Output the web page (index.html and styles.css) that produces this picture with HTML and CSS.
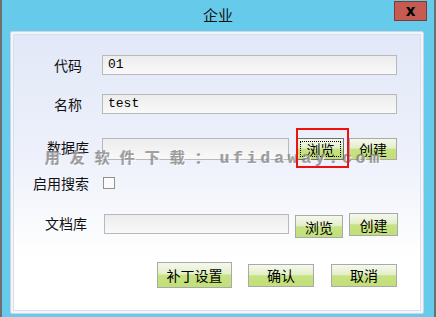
FILE: index.html
```html
<!DOCTYPE html>
<html lang="zh-CN">
<head>
  <meta charset="UTF-8" />
  <title>企业</title>
  <link rel="stylesheet" href="styles.css">
</head>
<body>
  <div class="window">
    <div class="titlebar">
      <span class="title">企业</span>
      <button class="close">x</button>
    </div>

    <div class="panel">
      <div class="row row-code">
        <label class="lbl">代码</label>
        <div class="field field-wide">01</div>
      </div>

      <div class="row row-name">
        <label class="lbl">名称</label>
        <div class="field field-wide">test</div>
      </div>

      <div class="row row-db">
        <label class="lbl">数据库</label>
        <div class="field field-short"></div>
        <button class="btn btn-small btn-focus">浏览</button>
        <button class="btn btn-small btn-create">创建</button>
      </div>

      <div class="row row-search">
        <label class="lbl lbl-search">启用搜索</label>
        <span class="check"></span>
      </div>

      <div class="row row-doc">
        <label class="lbl lbl-doc">文档库</label>
        <div class="field field-doc"></div>
        <button class="btn btn-small btn-doc-browse">浏览</button>
        <button class="btn btn-small btn-doc-create">创建</button>
      </div>

      <div class="row row-actions">
        <button class="btn btn-patch">补丁设置</button>
        <button class="btn btn-ok">确认</button>
        <button class="btn btn-cancel">取消</button>
      </div>

      <div class="watermark"><span class="wm-cjk">用友软件下载：</span><span class="wm-latin">ufidaway.com</span></div>
      <div class="highlight"></div>
    </div>
  </div>
</body>
</html>
```

FILE: styles.css
```css
body {
  margin: 0;
  font-family: "Noto Sans CJK SC", "Noto Sans", sans-serif;
  font-size: 14px;
  color: #111;
}

.window {
  width: 436px;
  height: 317px;
  box-sizing: border-box;
  background: #66caea;
  border-left: 2px solid #6e6e6e;
  border-right: 2px solid #6e6e6e;
  overflow: hidden;
}

.titlebar {
  position: relative;
  height: 31px;
  display: flex;
  align-items: center;
  justify-content: center;
}

.title {
  font-size: 15px;
  line-height: 18px;
  margin-top: -1px;
}

.close {
  position: absolute;
  top: 1px;
  right: 7px;
  width: 33px;
  height: 20px;
  padding: 0;
  background: #c55b51;
  border: 1px solid #7c3b35;
  font-family: "DejaVu Sans", sans-serif;
  font-weight: bold;
  font-size: 15px;
  line-height: 16px;
  color: #000;
}

.panel {
  position: relative;
  height: 283px;
  box-sizing: border-box;
  margin: 0 10px 0 8px;
  border: 1px solid #cbd6e4;
  border-radius: 2px;
  background: linear-gradient(#e2e8f8 0%, #eef1fb 45%, #ffffff 80%);
  box-shadow: inset 0 0 0 2px #f3f5fb, inset 0 0 0 3px #d9e0ec;
  display: flex;
  flex-direction: column;
}

.row {
  display: flex;
  align-items: center;
}

.lbl {
  width: 64px;
  margin-left: 25px;
  text-align: center;
  line-height: 20px;
  white-space: nowrap;
  flex-shrink: 0;
}

.lbl-search {
  width: 66px;
  margin-left: 22px;
  text-align: left;
}

.lbl-doc {
  width: 58px;
  margin-left: 26px;
}

.field {
  height: 20px;
  box-sizing: border-box;
  margin-left: 2px;
  border: 1px solid #b9b9b9;
  background: linear-gradient(#ececec, #f9f9f9);
  font-family: "Liberation Mono", monospace;
  font-size: 13px;
  line-height: 18px;
  padding-left: 5px;
  color: #000;
}

.field-wide {
  width: 295px;
}

.field-short {
  width: 187px;
  height: 22px;
}

.field-doc {
  width: 185px;
  margin-left: 9px;
  margin-top: 1px;
}

.check {
  width: 12px;
  height: 12px;
  box-sizing: border-box;
  margin-left: 4px;
  border: 1px solid #929292;
  background: #fbfbfb;
}

.btn {
  position: relative;
  padding: 0;
  box-sizing: border-box;
  border: 1px solid #a9a9a9;
  background: linear-gradient(#f5f8ee 0%, #e3efc9 45%, #c7e283 52%, #c2df78 100%);
  font-family: "Noto Sans CJK SC", sans-serif;
  font-size: 14px;
  line-height: 18px;
  color: #000;
}

.btn-small {
  width: 48px;
  height: 22px;
}

.btn-focus {
  margin-left: 8px;
  width: 47px;
  border-color: #6f6f6f;
}

.btn-focus::after {
  content: "";
  position: absolute;
  inset: 2px;
  border: 1px dotted #000;
}

.btn-create {
  margin-left: 5px;
}

.row-code {
  margin-top: 23px;
  height: 20px;
}

.row-name {
  margin-top: 19px;
  height: 20px;
}

.row-db {
  margin-top: 24px;
  height: 22px;
}

.row-db .lbl {
  margin-top: -5px;
}

.row-search {
  margin-top: 17px;
  height: 12px;
}

.row-doc {
  margin-top: 24px;
  height: 25px;
  align-items: flex-start;
}

.btn-doc-browse {
  margin-left: 6px;
  margin-top: 2px;
  height: 23px;
}

.btn-doc-create {
  margin-left: 6px;
  width: 49px;
  height: 23px;
}

.row-actions {
  margin-top: 24px;
  height: 26px;
  padding-left: 146px;
}

.btn-patch {
  width: 75px;
  height: 26px;
}

.btn-ok {
  margin-left: 16px;
  width: 66px;
  height: 23px;
}

.btn-cancel {
  margin-left: 17px;
  width: 66px;
  height: 23px;
}

.watermark {
  position: absolute;
  left: 34px;
  top: 117px;
  white-space: nowrap;
  color: rgba(125, 125, 125, 0.7);
  text-shadow: 1px 1px 0 rgba(255, 255, 255, 0.8), -1px 0 0 rgba(90, 90, 90, 0.3);
  line-height: 15px;
  pointer-events: none;
}

.wm-cjk {
  font-size: 15px;
  letter-spacing: 10px;
  font-weight: bold;
}

.wm-latin {
  font-family: "Liberation Mono", monospace;
  font-size: 16px;
  letter-spacing: 4px;
  font-weight: bold;
}

.highlight {
  position: absolute;
  left: 285px;
  top: 96px;
  width: 53px;
  height: 40px;
  box-sizing: border-box;
  border: 2px solid #f01010;
}
```
